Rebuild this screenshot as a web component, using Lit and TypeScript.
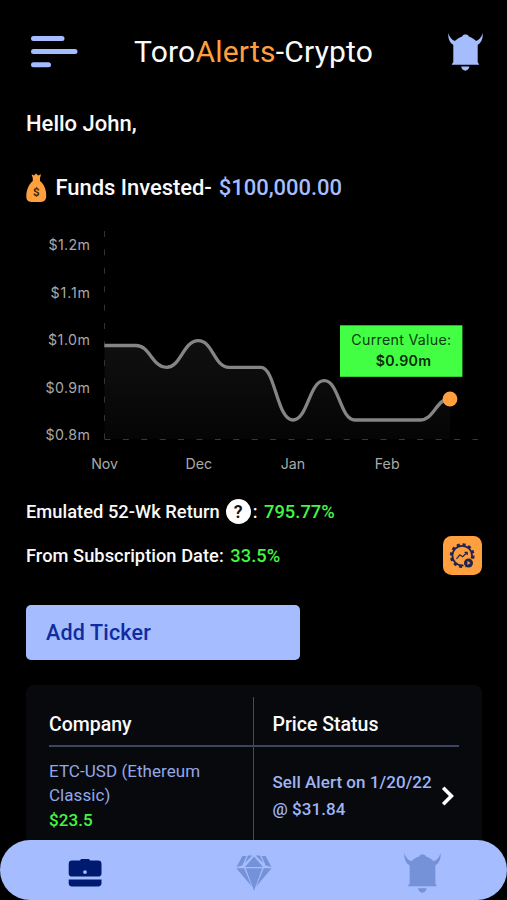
import { LitElement, html, svg, css } from "lit";
import { customElement } from "lit/decorators.js";

const bell = svg`
  <path d="M0.3 0C-0.1 5.5 1.8 10.2 5.8 12L8.6 8.4C4.6 7.8 1.6 4.6 0.3 0ZM34.7 0C35.1 5.5 33.2 10.2 29.2 12L26.4 8.4C30.4 7.8 33.4 4.6 34.7 0Z"/>
  <path d="M14.2 3.4C14.8 0.9 20.2 0.9 20.8 3.4C24 4.5 27.6 6.6 29.7 9.8V29L31.2 31.7H3.6L5.3 29V9.8C7.4 6.6 11 4.5 14.2 3.4Z"/>
  <path d="M13.2 33.6H21.4C20.8 39 13.8 39 13.2 33.6Z"/>`;

@customElement("value-chart")
class ValueChart extends LitElement {
  static styles = css`
    :host { display: block; height: 260px; }
    svg { display: block; }
    .label { font: 400 14.2px Inter, sans-serif; fill: #a9a9a9; }
    .tip { font: 400 14.2px Inter, sans-serif; fill: #0a3a10; letter-spacing: 0.3px; }
    .strong { font-weight: 600; fill: #062c0a; }
  `;

  private levels = ["$1.2m", "$1.1m", "$1.0m", "$0.9m", "$0.8m"];
  private widths = [41.5, 39.5, 42, 44.5, 44.5];
  private months = ["Nov", "Dec", "Jan", "Feb"];
  private line =
    "M104.5 125.5H136C150 125.5 152 147.3 166.5 147.3C181 147.3 183 120.7 198.3 120.7C213 120.7 214 147.3 229 147.3H261C275 147.3 277 200 292.7 200C308 200 309 160.7 324.3 160.7C339 160.7 340 200 355 200H420C434 200 436 178.8 450 178.8";

  render() {
    return html`<svg width="507" height="260" viewBox="0 0 507 260">
      <defs>
        <linearGradient id="fade" x1="0" y1="0" x2="0" y2="1">
          <stop offset="0" stop-color="#101010" />
          <stop offset="1" stop-color="#050505" />
        </linearGradient>
      </defs>
      <path d="${this.line}V219H104.5Z" fill="url(#fade)" />
      <path d="M104.5 11V219" stroke="#333" stroke-dasharray="6 12.4" />
      <path d="M104.5 219.5H478" stroke="#383838" stroke-dasharray="6 12.4" />
      ${this.levels.map((t, i) => svg`<text class="label" x="90" y=${30.3 + i * 47.4} text-anchor="end" textLength=${this.widths[i]}>${t}</text>`)}
      ${this.months.map((t, i) => svg`<text class="label" x=${104.6 + i * 94.2} y="249.3" text-anchor="middle">${t}</text>`)}
      <path d=${this.line} fill="none" stroke="#858585" stroke-width="3.3" />
      <circle cx="450" cy="179" r="7.4" fill="#ff9f3e" />
      <rect x="340" y="105.3" width="122.4" height="51.5" fill="#43ff43" />
      <text class="tip" x="401.4" y="125.4" text-anchor="middle">Current Value:</text>
      <text class="tip strong" x="403.5" y="146" text-anchor="middle">$0.90m</text>
    </svg>`;
  }
}

@customElement("app-root")
class AppRoot extends LitElement {
  static styles = css`
    :host {
      display: flex; flex-direction: column; width: 507px; height: 900px; overflow: hidden;
      background: #000; color: #fafafa; font-family: Roboto, sans-serif; font-weight: 500;
      white-space: nowrap;
    }
    svg { display: block; flex: none; }
    header { display: flex; align-items: center; height: 103px; flex: none; padding: 0 24px 0 31px; box-sizing: border-box; }
    header .bell { margin-left: auto; }
    h1 { margin: 0 0 0 55px; font-size: 30px; font-weight: 400; letter-spacing: 0.22px; }
    .accent { color: #ff9f3e; }
    .blue { color: #a5bdff; }
    .green { color: #45f545; }
    .hello { font-size: 22px; line-height: 40px; padding-left: 26px; margin-top: 1px; }
    .funds { display: flex; align-items: center; height: 44px; margin-top: 21.5px; padding-left: 26px; font-size: 22px; letter-spacing: -0.04px; }
    .funds svg { margin-right: 8.5px; }
    .funds .blue { margin-left: 7px; }
    value-chart { margin-top: 10.5px; flex: none; }
    .stats { display: flex; flex-direction: column; padding: 9px 25px 0 26px; font-size: 18.3px; letter-spacing: 0.03px; }
    .row { display: flex; align-items: center; height: 44px; }
    .row .green { margin-left: 6.5px; }
    .help { display: grid; place-items: center; width: 25px; height: 25px; border-radius: 50%; background: #fff; color: #111; font-size: 18px; margin: 0 2px 0 6px; font-weight: 600; }
    .tool { margin-left: auto; }
    .add { box-sizing: border-box; margin: 28px 0 0 26px; width: 273.5px; height: 55px; border-radius: 5px; background: #a5bdff; color: #0f2ca0; font-size: 21.5px; letter-spacing: 0.17px; line-height: 55px; padding-left: 20px; flex: none; }
    .card { margin: 25px 25px 0 26px; height: 155px; flex: none; border-radius: 8px 8px 0 0; background: #07090d; padding: 12px 23px 0; box-sizing: border-box; display: grid; grid-template-columns: 205px 1fr; grid-template-rows: 50px 1fr; }
    .cell { box-sizing: border-box; }
    .left { border-right: 1.5px solid #414a68; }
    .right { padding-left: 18.5px; }
    .head { font-size: 19.5px; line-height: 55px; border-bottom: 2px solid #3b4563; }
    .company { font-size: 17px; font-weight: 400; line-height: 24.4px; padding-top: 12px; color: #94a8e6; letter-spacing: 0.05px; }
    .company .green { font-weight: 500; }
    .status { display: flex; align-items: center; font-size: 17px; line-height: 27px; padding-top: 4px; color: #a0b4f2; letter-spacing: 0.05px; }
    .status svg { margin-left: auto; margin-right: 4px; }
    nav { display: flex; justify-content: space-between; align-items: center; height: 60px; flex: none; box-sizing: border-box; border-radius: 30px; background: #a5bdff; padding: 5px 66px 0 68px; }
    .gem { margin-left: 2px; }
  `;

  render() {
    return html`
      <header>
        <svg width="48" height="34" viewBox="0 0 48 34" stroke="#a5bdff" stroke-width="5" stroke-linecap="round">
          <path d="M2.5 3.4H31M2.5 16.6H44M2.5 29.8H17.5" />
        </svg>
        <h1>Toro<span class="accent">Alerts</span>-Crypto</h1>
        <svg class="bell" width="35" height="38" viewBox="0 0 35 38" fill="#a5bdff">${bell}</svg>
      </header>
      <div class="hello">Hello John,</div>
      <div class="funds">
        <svg width="21" height="30" viewBox="0 0 21 30">
          <path d="M5.6 1.2L8 2.4L10 0.4L12.2 2.4L15 1.2L14 5.2V8C18 11 20.6 17 20.2 23.5C20 28 17 29 13.5 29H7C3 29 0.3 28 0.3 23.5C0.2 17 3 11 6.8 8V5.2Z" fill="#ff9f3e" />
          <text x="10.3" y="22.8" text-anchor="middle" font-size="11.5" font-weight="700" fill="#38230d">$</text>
        </svg>
        <span>Funds Invested-</span><span class="blue">$100,000.00</span>
      </div>
      <value-chart></value-chart>
      <div class="stats">
        <div class="row"><span>Emulated 52-Wk Return</span><span class="help">?</span>:<span class="green">795.77%</span></div>
        <div class="row">
          <span>From Subscription Date:</span><span class="green">33.5%</span>
          <svg class="tool" width="39" height="39" viewBox="0 0 39 39" fill="none" stroke="#202451">
            <rect width="39" height="39" rx="8.5" fill="#ff9f3e" stroke="none" />
            <circle cx="19.2" cy="19.6" r="11.2" stroke-width="2.4" stroke-dasharray="3.1 2.764" />
            <circle cx="19.2" cy="19.6" r="9.8" stroke-width="1.8" />
            <path d="M13.5 22.8L16.8 18.8L19.6 20.8L23.8 16.8M21.5 16.4H24.2V19" stroke-width="1.2" />
            <circle cx="25.5" cy="27" r="5.6" fill="#ff9f3e" stroke="none" />
            <circle cx="25.5" cy="27" r="4.5" fill="#202451" stroke="none" />
            <path d="M24.4 25.1L27.6 27L24.4 28.9Z" fill="#ff9f3e" stroke="none" />
          </svg>
        </div>
      </div>
      <div class="add">Add Ticker</div>
      <div class="card">
        <div class="cell left head">Company</div>
        <div class="cell right head">Price Status</div>
        <div class="cell left company">ETC-USD (Ethereum<br />Classic)<br /><span class="green">$23.5</span></div>
        <div class="cell right status">
          <span>Sell Alert on 1/20/22<br />@ $31.84</span>
          <svg width="14" height="20" viewBox="0 0 14 20"><path d="M2.2 1.8L10.4 10L2.2 18.2" fill="none" stroke="#fff" stroke-width="3.6" /></svg>
        </div>
      </div>
      <nav>
        <svg width="34" height="28" viewBox="0 0 34 28" fill="#001a70">
          <path fill-rule="evenodd" d="M4 1.6H12L13 0H21L22 1.6H30Q33.5 1.6 33.5 5V14.5Q33.5 17.6 30 17.6H4Q0.7 17.6 0.7 14.5V5Q0.7 1.6 4 1.6ZM17 11.2A1.9 1.9 0 1 0 17 15A1.9 1.9 0 1 0 17 11.2Z" />
          <path d="M0.7 20.4H33.5V24Q33.5 27.4 30 27.4H4Q0.7 27.4 0.7 24Z" />
        </svg>
        <svg class="gem" width="36" height="36" viewBox="0 0 36 36" fill="#7591d8">
          <path d="M6.4 1H10.4L6.4 10.5L0.5 12ZM12 0.5H16.4L8.8 8ZM19.6 0.5H24L27.2 8ZM25.6 1H29.6L35.5 12L29.6 10.5ZM18 1.6L27 12H9ZM0.3 13.3H8.2L15.8 31.5ZM9.8 13.3H26.2L18 35.7ZM27.8 13.3H35.7L20.2 31.5Z" />
        </svg>
        <svg width="37" height="40" viewBox="0 0 35 38" fill="#7591d8">${bell}</svg>
      </nav>
    `;
  }
}
